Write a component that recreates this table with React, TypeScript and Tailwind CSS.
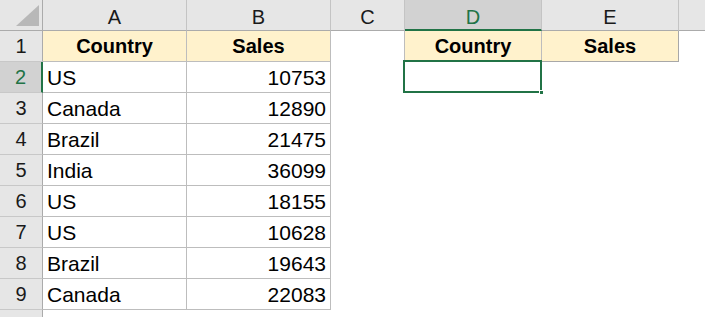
import React from "react";

const data: [string, number][] = [
  ["US", 10753],
  ["Canada", 12890],
  ["Brazil", 21475],
  ["India", 36099],
  ["US", 18155],
  ["US", 10628],
  ["Brazil", 19643],
  ["Canada", 22083],
];

const cols = ["A", "B", "C", "D", "E", ""];

function RowHeader({ n, selected }: { n?: number; selected?: boolean }) {
  return selected ? (
    <div className="flex items-center justify-center bg-[#d2d2d2] text-[#217346] border-r-2 border-b border-r-[#217346] border-b-[#c8c8c8] text-[20px] leading-none">
      {n}
    </div>
  ) : (
    <div className="flex items-center justify-center bg-[#e6e6e6] text-[#1a1a1a] border-r border-b border-r-[#ababab] border-b-[#c8c8c8] text-[20px] leading-none">
      {n}
    </div>
  );
}

function Blank({ right }: { right?: boolean }) {
  return (
    <div
      className={
        right
          ? "border-r border-b border-r-[#bdbdbd] border-b-transparent"
          : "border-r border-b border-transparent"
      }
    />
  );
}

export default function App() {
  return (
    <div
      className="w-[705px] h-[317px] overflow-hidden bg-white text-black"
      style={{ fontFamily: '"Liberation Sans", Arial, sans-serif' }}
    >
      <div className="grid grid-cols-[43px_144px_144px_74px_137px_137px_1fr] auto-rows-[31px]">
        {/* corner */}
        <div className="relative bg-[#e6e6e6] border-r border-b border-[#ababab]">
          <svg className="absolute left-0 top-0" width="42" height="30" viewBox="0 0 42 30">
            <polygon points="39,5 39,26 16,26" fill="#b8b8b8" />
          </svg>
        </div>
        {cols.map((c, i) =>
          c === "D" ? (
            <div
              key={i}
              className="flex items-center justify-center pt-[4px] bg-[#d2d2d2] text-[#217346] border-r border-b-2 border-r-[#c4c4c4] border-b-[#217346] text-[20px] leading-none"
            >
              {c}
            </div>
          ) : (
            <div
              key={i}
              className={
                i === 5
                  ? "flex items-center justify-center pt-[4px] bg-[#e6e6e6] text-[#1a1a1a] border-b border-b-[#ababab] text-[20px] leading-none"
                  : "flex items-center justify-center pt-[4px] bg-[#e6e6e6] text-[#1a1a1a] border-r border-b border-r-[#c4c4c4] border-b-[#ababab] text-[20px] leading-none"
              }
            >
              {c}
            </div>
          )
        )}

        {/* row 1 */}
        <RowHeader n={1} />
        <div className="flex items-center justify-center bg-[#fff2cc] border-r border-b border-[#bdbdbd] font-bold text-[20px] leading-none">
          Country
        </div>
        <div className="flex items-center justify-center bg-[#fff2cc] border-r border-b border-[#bdbdbd] font-bold text-[20px] leading-none">
          Sales
        </div>
        <Blank right />
        <div className="flex items-center justify-center bg-[#fff2cc] border-r border-b border-[#bdbdbd] font-bold text-[20px] leading-none">
          Country
        </div>
        <div className="flex items-center justify-center bg-[#fff2cc] border-r border-b border-[#a8a8a8] font-bold text-[20px] leading-none">
          Sales
        </div>
        <Blank />

        {data.map(([country, sales], idx) => (
          <React.Fragment key={idx}>
            <RowHeader n={idx + 2} selected={idx === 0} />
            <div className="flex items-center pl-[4px] border-r border-b border-[#bdbdbd] text-[21px] leading-none">
              {country}
            </div>
            <div className="flex items-center justify-end pr-[4px] border-r border-b border-[#bdbdbd] text-[21px] leading-none">
              {sales}
            </div>
            <Blank />
            {idx === 0 ? (
              <div className="relative border-r border-b border-transparent">
                <div className="absolute -left-[2px] -top-[2px] w-[139px] h-[33px] border-2 border-[#217346]" />
                <div className="absolute -right-[3px] -bottom-[3px] w-[5px] h-[5px] bg-[#217346] border border-white" />
              </div>
            ) : (
              <Blank />
            )}
            <Blank />
            <Blank />
          </React.Fragment>
        ))}

        {/* row 10 (only its top edge is in view) */}
        <RowHeader />
        <Blank />
        <Blank />
        <Blank />
        <Blank />
        <Blank />
        <Blank />
      </div>
    </div>
  );
}
